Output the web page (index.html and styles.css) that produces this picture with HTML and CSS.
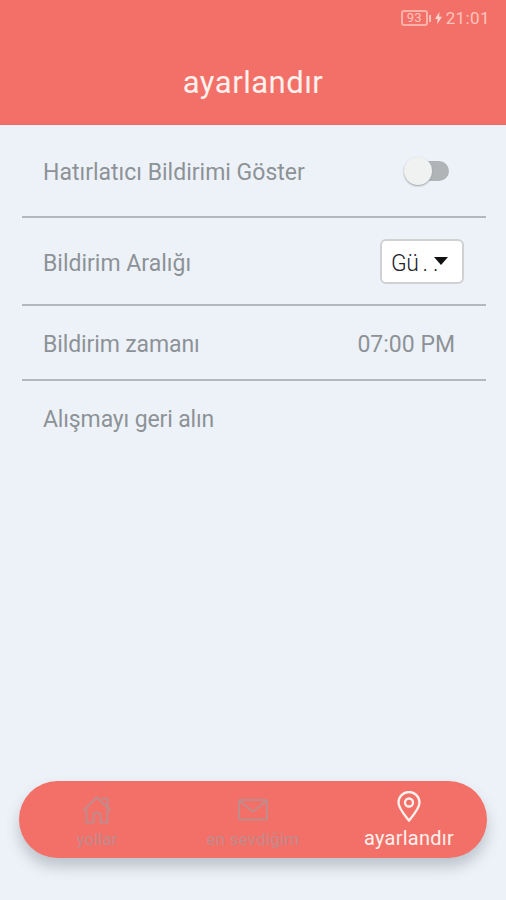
FILE: index.html
```html
<!DOCTYPE html>
<html lang="tr">
<head>
<meta charset="utf-8">
<title>ayarlandır</title>
<link rel="stylesheet" href="styles.css">
</head>
<body>
<div class="app">
  <header class="header">
    <div class="status">
      <span class="battery">93</span><span class="battery-tip"></span>
      <svg class="bolt" viewBox="0 0 8 14"><path d="M5 0 0 8h3L2.500 14 8 5.500H4.700z"/></svg>
      <span class="clock">21:01</span>
    </div>
    <h1 class="title">ayarlandır</h1>
  </header>
  <main class="settings">
    <section class="row row-reminder">
      <span class="label label-reminder">Hatırlatıcı Bildirimi Göster</span>
      <span class="switch" role="switch" aria-checked="false"><span class="thumb"></span></span>
    </section>
    <section class="row row-interval">
      <span class="label label-interval">Bildirim Aralığı</span>
      <button class="select"><span class="select-value">Gü<span class="dots">..</span></span><svg class="caret" viewBox="0 0 14 8"><path d="M0 0h14L7 8z"/></svg></button>
    </section>
    <section class="row row-time">
      <span class="label label-time">Bildirim zamanı</span>
      <span class="label time">07:00 PM</span>
    </section>
    <section class="row row-undo">
      <span class="label label-undo">Alışmayı geri alın</span>
    </section>
  </main>
  <nav class="nav">
    <a class="tab">
      <svg class="icon" viewBox="0 0 32 32"><path d="M2.500 16.500 16 3.500 29.500 16.500M5.500 15v13.500h7V22q0-3.500 3.500-3.500t3.500 3.500v6.500h7V15M20.500 4.500h6v8.500"/></svg>
      <span class="tab-label">yollar</span>
    </a>
    <a class="tab">
      <svg class="icon" viewBox="0 0 32 32"><rect x="2" y="6" width="28" height="19.500" rx="1"/><path d="m2.500 7 13.500 10.500L29.500 7"/></svg>
      <span class="tab-label tab-favorite">en sevdiğim</span>
    </a>
    <a class="tab active">
      <svg class="icon" viewBox="0 0 32 32"><path d="M16 29.500C12 24.500 5.500 17.500 5.500 11.500a10.500 10.500 0 0 1 21 0c0 6-6.500 13-10.500 18z"/><circle cx="16" cy="11.500" r="4"/></svg>
      <span class="tab-label">ayarlandır</span>
    </a>
  </nav>
</div>
</body>
</html>
```
FILE: styles.css
```css
* { box-sizing: border-box; }
body { margin: 0; font-family: Roboto, "Liberation Sans", sans-serif; }
.app { width: 506px; height: 900px; background: #edf2f9; display: flex; flex-direction: column; overflow: hidden; }
.header { height: 125px; background: #f37069; border-bottom: 1px solid #ec6a69; flex: none; }
.status { height: 36px; padding-right: 16px; display: flex; justify-content: flex-end; align-items: center; color: #ffc4bd; }
.battery { width: 27px; height: 16px; border: 2px solid #fbb0a8; border-radius: 3px; font-size: 13px; line-height: 12px; text-align: center; }
.battery-tip { width: 2px; height: 7px; margin-left: 1px; background: #ffc0b8; }
.bolt { width: 7px; height: 14px; margin: 0 4px 0 4px; fill: #ffd5cf; }
.clock { font-size: 17px; line-height: 20px; letter-spacing: .4px; }
.title { margin: 29px 0 0; font-size: 31px; line-height: 36px; font-weight: 400; letter-spacing: .5px; text-align: center; color: #fff1ed; }
.settings { width: 464px; margin-left: 22px; flex: 1; }
.row { display: flex; justify-content: space-between; align-items: center; padding-left: 21px; border-bottom: 2px solid #b2b8bb; }
.row-reminder { height: 93px; padding-right: 37px; }
.row-interval { height: 88px; padding-right: 22px; }
.row-time { height: 75px; padding-right: 31px; padding-top: 5px; }
.row-undo { height: 78px; border: 0; }
.label { font-size: 23px; line-height: 30px; color: #8d9297; white-space: nowrap; }
.label-reminder { padding-top: 5px; }
.label-interval { padding-top: 6px; }
.label-time { letter-spacing: -.12px; }
.label-undo { letter-spacing: -.14px; }
.switch { width: 43px; height: 20px; border-radius: 10px; background: #b0b4b6; display: flex; align-items: center; }
.thumb { width: 28px; height: 28px; flex: none; margin-left: -2px; border-radius: 50%; background: #f0f1f1; box-shadow: 0 1px 2px #9b9fa2; }
.select { width: 84px; height: 45px; padding: 0 14px 0 9px; border: 2px solid #cfd1d2; border-radius: 6px; background: #fff; display: flex; align-items: center; justify-content: space-between; font: 300 23px/30px Roboto, sans-serif; color: #23232d; }
.select-value { white-space: nowrap; width: 44px; padding-top: 5px; letter-spacing: -.4px; }
.dots { letter-spacing: 5px; margin-left: 4px; }
.caret { width: 14px; height: 8px; flex: none; margin-left: -3px; fill: #111; }
.nav { width: 468px; height: 77px; flex: none; margin: 0 0 42px 19px; border-radius: 39px; background: #f37069; box-shadow: 0 9px 14px rgba(80, 90, 100, .3); display: flex; }
.tab { flex: 1; display: flex; flex-direction: column; align-items: center; padding-top: 13px; color: #c18a8b; }
.icon { width: 32px; height: 32px; fill: none; stroke: currentColor; stroke-width: 2; }
.tab-label { font-size: 17px; line-height: 20px; margin-top: 3px; white-space: nowrap; }
.tab-favorite { letter-spacing: .2px; }
.tab.active { color: #fff1ed; padding-top: 10px; }
.active .icon { stroke-width: 2.300; }
.active .tab-label { font-size: 20px; line-height: 24px; letter-spacing: .25px; }
```
